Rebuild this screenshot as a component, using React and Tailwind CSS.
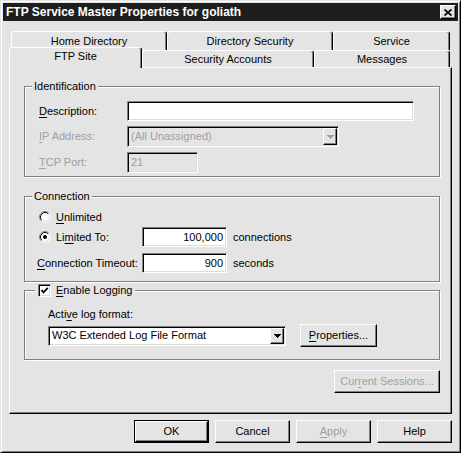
import React from "react";

const raised =
  "border border-t-white border-l-white border-r-black border-b-black shadow-[inset_-1px_-1px_0_#808080]";
const sunken =
  "border border-t-[#808080] border-l-[#808080] border-r-white border-b-white shadow-[inset_1px_1px_0_#000,inset_-1px_-1px_0_#dcdcdc]";
const tabBase =
  "bg-[#e4e4e4] border-l border-t border-r border-l-white border-t-white border-r-black shadow-[inset_-1px_0_0_#808080] rounded-t-[3px] flex justify-center";

function U({ children }) {
  return <span className="underline underline-offset-2 decoration-1">{children}</span>;
}

function Arrow({ disabled }) {
  const fill = disabled ? "#a0a0a0" : "#000";
  return (
    <svg width="7" height="4" viewBox="0 0 7 4" shapeRendering="crispEdges">
      <rect x="0" y="0" width="7" height="1" fill={fill} />
      <rect x="1" y="1" width="5" height="1" fill={fill} />
      <rect x="2" y="2" width="3" height="1" fill={fill} />
      <rect x="3" y="3" width="1" height="1" fill={fill} />
    </svg>
  );
}

function Radio({ checked }) {
  return (
    <svg width="12" height="12" viewBox="0 0 12 12" className="shrink-0">
      <circle cx="6" cy="6" r="5" fill="#fff" />
      <path d="M2.11 9.89 A5.5 5.5 0 0 1 9.89 2.11" fill="none" stroke="#808080" strokeWidth="1" />
      <path d="M9.89 2.11 A5.5 5.5 0 0 1 2.11 9.89" fill="none" stroke="#fff" strokeWidth="1" />
      <path d="M2.82 9.18 A4.5 4.5 0 0 1 9.18 2.82" fill="none" stroke="#000" strokeWidth="1" />
      <path d="M9.18 2.82 A4.5 4.5 0 0 1 2.82 9.18" fill="none" stroke="#dcdcdc" strokeWidth="1" />
      {checked && <circle cx="6" cy="6" r="2" fill="#000" />}
    </svg>
  );
}

function Check() {
  return (
    <div className={`w-[13px] h-[13px] bg-white ${sunken} flex items-center justify-center shrink-0`}>
      <svg width="9" height="9" viewBox="0 0 9 9">
        <path d="M1.5 4 L3.5 6.3 L7.8 1.8" fill="none" stroke="#000" strokeWidth="1.8" />
      </svg>
    </div>
  );
}

function Group({ legend, legendClass, className, children }) {
  return (
    <div
      className={`border border-[#808080] shadow-[inset_1px_1px_0_#fff,1px_1px_0_#fff] flex flex-col w-[416px] ${className}`}
    >
      <div className={`-mt-[8px] h-[14px] w-fit flex items-center bg-[#e4e4e4] ${legendClass}`}>
        {legend}
      </div>
      {children}
    </div>
  );
}

export default function App() {
  return (
    <div className="w-[461px] h-[453px] bg-[#e4e4e4] border border-t-[#e4e4e4] border-l-[#e4e4e4] border-r-black border-b-black shadow-[inset_1px_1px_0_#fff,inset_-1px_-1px_0_#808080] p-[2px] flex flex-col font-['Liberation_Sans',Arial,sans-serif] text-[11px] leading-[13px] text-black select-none overflow-hidden">
      {/* Title bar */}
      <div className="h-[18px] shrink-0 bg-[#1e1e1e] flex items-center justify-between pl-[3px] pr-[2px]">
        <span className="text-white font-bold text-[12px] leading-[14px]">
          FTP Service Master Properties for goliath
        </span>
        <div className={`w-[16px] h-[14px] bg-[#e4e4e4] ${raised} flex items-center justify-center`}>
          <svg width="8" height="7" viewBox="0 0 8 7">
            <path d="M0.5 0.5 L7.5 6.5 M7.5 0.5 L0.5 6.5" stroke="#000" strokeWidth="1.7" />
          </svg>
        </div>
      </div>

      <div className="px-[6px] flex flex-col">
        {/* Tab row 1 */}
        <div className="mt-[10px] pl-[2px] flex h-[19px]">
          <div className={`w-[156px] h-full items-center ${tabBase}`}>Home Directory</div>
          <div className={`w-[166px] h-full items-center ${tabBase}`}>Directory Security</div>
          <div className={`w-[117px] h-full items-center ${tabBase}`}>Service</div>
        </div>
        {/* Tab row 2 */}
        <div className="-mt-[3px] h-[21px] flex items-start">
          <div className={`relative z-10 w-[133px] h-[21px] items-start pt-[2px] ${tabBase}`}>FTP Site</div>
          <div className={`mt-[3px] w-[172px] h-[17px] items-center pt-[1px] ${tabBase}`}>Security Accounts</div>
          <div className={`mt-[3px] w-[136px] h-[17px] items-center pt-[1px] ${tabBase}`}>Messages</div>
        </div>

        {/* Panel */}
        <div className="-mt-[1px] h-[347px] border border-t-white border-l-white border-r-black border-b-black shadow-[inset_-1px_-1px_0_#808080] pl-[14px] flex flex-col">
          {/* Identification */}
          <Group legend="Identification" legendClass="ml-[7px] px-[2px]" className="mt-[18px] h-[91px]">
            <div className="mt-[8px] h-[20px] flex items-center pl-[14px]">
              <div className="w-[88px]">
                <U>D</U>escription:
              </div>
              <div className={`w-[287px] h-[20px] bg-white ${sunken}`}></div>
            </div>
            <div className="mt-[5px] h-[21px] flex items-center pl-[14px] text-[#a0a0a0]">
              <div className="w-[88px]">
                <U>I</U>P Address:
              </div>
              <div className={`w-[212px] h-[21px] bg-[#e4e4e4] ${sunken} p-[1px] flex items-stretch`}>
                <div className="flex-1 pl-[2px] flex items-center">(All Unassigned)</div>
                <div className={`w-[14px] bg-[#e4e4e4] ${raised} flex items-center justify-center`}>
                  <Arrow disabled />
                </div>
              </div>
            </div>
            <div className="mt-[5px] h-[21px] flex items-center pl-[14px] text-[#a0a0a0]">
              <div className="w-[88px]">
                <U>T</U>CP Port:
              </div>
              <div className={`w-[71px] h-[21px] bg-[#e4e4e4] ${sunken} pl-[3px] flex items-center`}>21</div>
            </div>
          </Group>

          {/* Connection */}
          <Group legend="Connection" legendClass="ml-[7px] px-[2px]" className="mt-[19px] h-[86px]">
            <div className="mt-[7px] h-[14px] flex items-center pl-[14px] gap-[5px]">
              <Radio />
              <span>
                <U>U</U>nlimited
              </span>
            </div>
            <div className="mt-[3px] h-[20px] flex items-center pl-[14px]">
              <Radio checked />
              <div className="ml-[5px] w-[86px]">
                Li<U>m</U>ited To:
              </div>
              <div className={`w-[85px] h-[20px] bg-white ${sunken} pr-[3px] flex items-center justify-end`}>
                100,000
              </div>
              <span className="ml-[6px]">connections</span>
            </div>
            <div className="mt-[6px] h-[20px] flex items-center pl-[12px]">
              <div className="w-[105px]">
                <U>C</U>onnection Timeout:
              </div>
              <div className={`w-[85px] h-[20px] bg-white ${sunken} pr-[3px] flex items-center justify-end`}>
                900
              </div>
              <span className="ml-[6px]">seconds</span>
            </div>
          </Group>

          {/* Logging */}
          <Group
            legend={
              <div className="flex items-center gap-[5px]">
                <Check />
                <span>
                  <U>E</U>nable Logging
                </span>
              </div>
            }
            legendClass="ml-[10px] px-[3px]"
            className="mt-[8px] h-[70px]"
          >
            <div className="mt-[10px] h-[14px] flex items-center pl-[23px]">
              Acti<U>v</U>e log format:
            </div>
            <div className="mt-[3px] h-[23px] flex items-center pl-[23px]">
              <div className={`w-[238px] h-[20px] bg-white ${sunken} p-[1px] flex items-stretch`}>
                <div className="flex-1 pl-[2px] flex items-center">W3C Extended Log File Format</div>
                <div className={`w-[14px] bg-[#e4e4e4] ${raised} flex items-center justify-center`}>
                  <Arrow />
                </div>
              </div>
              <div className={`ml-[14px] w-[77px] h-[23px] ${raised} flex items-center justify-center`}>
                <span>
                  <U>P</U>roperties...
                </span>
              </div>
            </div>
          </Group>

          <div className="mt-[10px] w-[416px] flex justify-end">
            <div className={`w-[106px] h-[23px] ${raised} flex items-center justify-center text-[#a0a0a0]`}>
              <span>
                Cur<U>r</U>ent Sessions...
              </span>
            </div>
          </div>
        </div>

        {/* Buttons */}
        <div className="mt-[6px] flex justify-end gap-[6px]">
          <div className="w-[75px] h-[23px] border border-black">
            <div className={`w-full h-full ${raised} flex items-center justify-center`}>OK</div>
          </div>
          <div className={`w-[75px] h-[23px] ${raised} flex items-center justify-center`}>Cancel</div>
          <div className={`w-[75px] h-[23px] ${raised} flex items-center justify-center text-[#a0a0a0]`}>
            <span>
              <U>A</U>pply
            </span>
          </div>
          <div className={`w-[75px] h-[23px] ${raised} flex items-center justify-center`}>Help</div>
        </div>
      </div>
    </div>
  );
}
